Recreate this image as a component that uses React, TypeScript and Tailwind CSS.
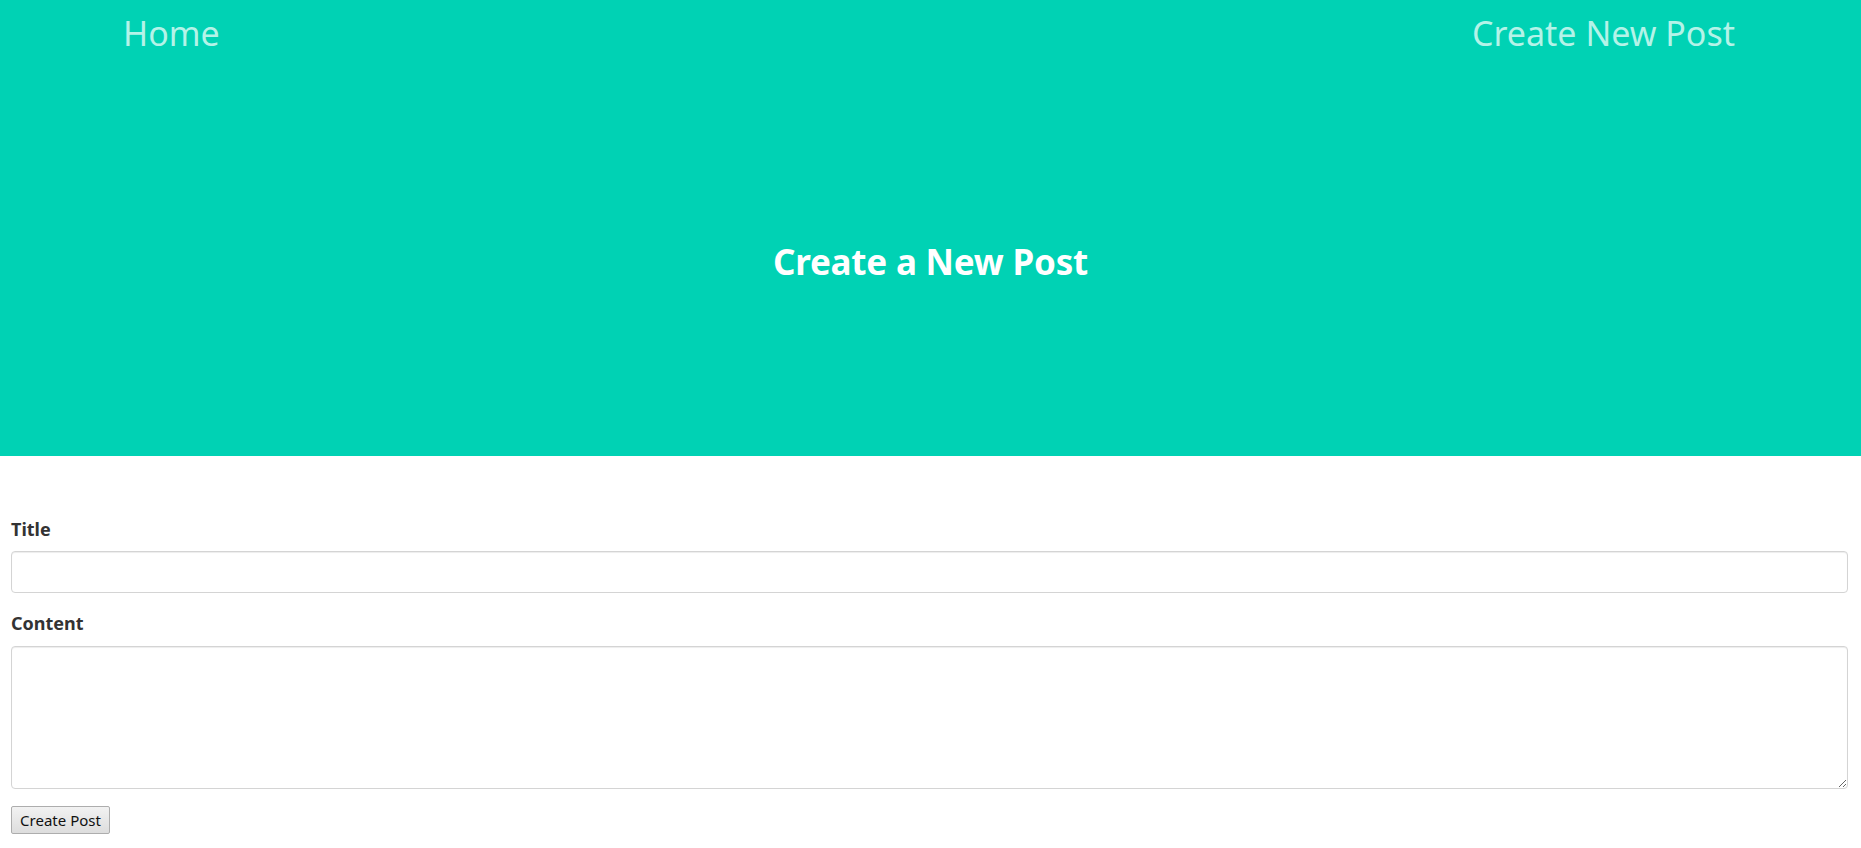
import React from "react";

export default function App() {
  const font = { fontFamily: '"Noto Sans", "Open Sans", sans-serif' };
  return (
    <div className="min-h-screen bg-white" style={font}>
      <header className="bg-[#00d2b4] h-[456px] flex flex-col">
        <nav className="h-[66px] flex items-center justify-between pl-[123px] pr-[126px]">
          <a href="#" className="text-[34px] font-normal text-[#b4f3e8] leading-none">
            Home
          </a>
          <a href="#" className="text-[34px] font-normal text-[#b4f3e8] leading-none">
            Create New Post
          </a>
        </nav>
        <div className="flex-1 flex items-center justify-center">
          <h1 className="text-[35px] font-bold text-white leading-none tracking-[-0.2px]">
            Create a New Post
          </h1>
        </div>
      </header>
      <form className="px-[11px] pt-[61px]" onSubmit={(e) => e.preventDefault()}>
        <label className="block text-[18px] font-bold text-[#333] leading-[24px] mb-[10px]">Title</label>
        <input
          type="text"
          className="block w-[1837px] h-[42px] border border-[#d4d4d4] rounded-[4px] shadow-[inset_0_1px_1px_rgba(0,0,0,0.075)] px-3 outline-none"
        />
        <label className="block text-[18px] font-bold text-[#333] leading-[24px] mt-[18px] mb-[11px]">Content</label>
        <textarea
          className="block w-[1837px] h-[143px] border border-[#d4d4d4] rounded-[4px] shadow-[inset_0_1px_1px_rgba(0,0,0,0.075)] px-3 py-2 outline-none resize-y"
        />
        <button
          type="submit"
          className="mt-[17px] h-[28px] w-[99px] border border-[#adadad] rounded-[2px] bg-gradient-to-b from-[#f2f2f2] to-[#dddddd] text-[15px] text-[#111] leading-none"
          style={{ fontFamily: '"Noto Sans", "Open Sans", sans-serif' }}
        >
          Create Post
        </button>
      </form>
    </div>
  );
}
